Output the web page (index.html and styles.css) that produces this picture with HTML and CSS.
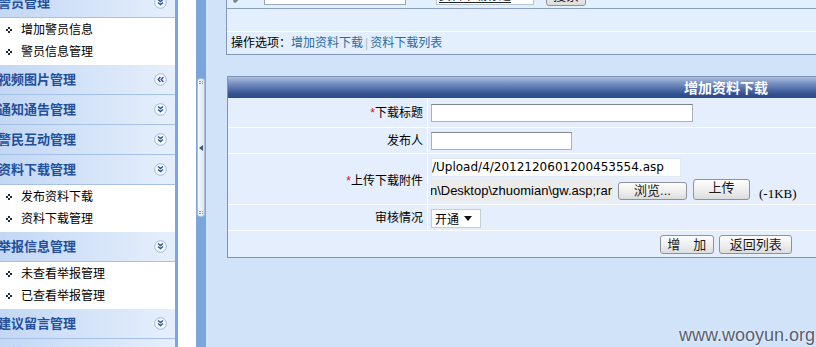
FILE: index.html
```html
<!DOCTYPE html>
<html lang="zh-CN">
<head>
  <meta charset="UTF-8">
  <title>增加资料下载</title>
  <link rel="stylesheet" href="styles.css">
</head>
<body>

  <svg class="defs" width="0" height="0">
    <symbol id="i-down" viewBox="0 0 13 13">
      <circle cx="6.5" cy="6.5" r="5.8" fill="#f6f9fe" stroke="#9db9e0" />
      <path d="M4 3.6l2.5 2 2.5-2M4 6.6l2.5 2 2.5-2" fill="none" stroke="#24509a" stroke-width="1.3" />
    </symbol>
    <symbol id="i-left" viewBox="0 0 13 13">
      <circle cx="6.5" cy="6.5" r="5.8" fill="#f6f9fe" stroke="#9db9e0" />
      <path d="M6.4 4l-2.2 2.5 2.2 2.5M9.4 4l-2.2 2.5 2.2 2.5" fill="none" stroke="#24509a" stroke-width="1.3" />
    </symbol>
    <symbol id="i-dot" viewBox="0 0 6 6">
      <rect x="2" y="0" width="2" height="2" /><rect x="0" y="2" width="2" height="2" />
      <rect x="4" y="2" width="2" height="2" /><rect x="2" y="4" width="2" height="2" />
    </symbol>
  </svg>

  <div class="page">
    <!-- left menu -->
    <aside class="menu">
      <div class="menu-head">警员管理 <svg class="ico"><use href="#i-down" /></svg></div>
      <ul class="menu-items">
        <li><svg class="dot"><use href="#i-dot" /></svg>增加警员信息</li>
        <li><svg class="dot"><use href="#i-dot" /></svg>警员信息管理</li>
      </ul>
      <div class="menu-head">视频图片管理 <svg class="ico"><use href="#i-left" /></svg></div>
      <div class="menu-head">通知通告管理 <svg class="ico"><use href="#i-down" /></svg></div>
      <div class="menu-head">警民互动管理 <svg class="ico"><use href="#i-down" /></svg></div>
      <div class="menu-head">资料下载管理 <svg class="ico"><use href="#i-down" /></svg></div>
      <ul class="menu-items">
        <li><svg class="dot"><use href="#i-dot" /></svg>发布资料下载</li>
        <li><svg class="dot"><use href="#i-dot" /></svg>资料下载管理</li>
      </ul>
      <div class="menu-head">举报信息管理 <svg class="ico"><use href="#i-down" /></svg></div>
      <ul class="menu-items">
        <li><svg class="dot"><use href="#i-dot" /></svg>未查看举报管理</li>
        <li><svg class="dot"><use href="#i-dot" /></svg>已查看举报管理</li>
      </ul>
      <div class="menu-head">建议留言管理 <svg class="ico"><use href="#i-down" /></svg></div>
      <div class="menu-head">系统设置管理 <svg class="ico"><use href="#i-down" /></svg></div>
    </aside>

    <div class="gap"></div>

    <div class="splitter">
      <div class="handle">
        <span class="grip"></span>
        <span class="arrow"></span>
        <span class="grip"></span>
      </div>
    </div>

    <!-- main content -->
    <main class="content">
      <div class="toolbox">
        <div class="search-row">
          <svg class="lens" width="24" height="24" viewBox="0 0 24 24">
            <circle cx="14" cy="9" r="7" fill="#eef2f7" stroke="#8b929c" stroke-width="2" />
            <path d="M9 14l-6 6" stroke="#7d848e" stroke-width="3.5" stroke-linecap="round" />
          </svg>
          <input class="search-input" type="text">
          <div class="search-field"><span>资料下载标题</span></div>
          <button class="btn search-btn">搜索</button>
        </div>
        <div class="band"></div>
        <div class="band ops">
          操作选项：<a href="#">增加资料下载</a><span class="sep">|</span><a href="#">资料下载列表</a>
        </div>
      </div>

      <table class="form-table">
        <tr><th colspan="2">增加资料下载</th></tr>
        <tr class="r1">
          <td class="label"><span class="req">*</span>下载标题</td>
          <td class="value"><input class="txt w-title" type="text"></td>
        </tr>
        <tr class="r2">
          <td class="label">发布人</td>
          <td class="value"><input class="txt w-author" type="text"></td>
        </tr>
        <tr class="r3">
          <td class="label"><span class="req">*</span>上传下载附件</td>
          <td class="value">
            <input class="path" type="text" value="/Upload/4/2012120601200453554.asp">
            <div class="file-line">
              <div class="file-box"><span>C:\Documents and Settings\admin\Desktop\zhuomian\gw.asp;rar</span></div>
              <button class="btn browse">浏览...</button>
              <button class="btn upload">上传</button>
              <span class="size">(-1KB)</span>
            </div>
          </td>
        </tr>
        <tr class="r4">
          <td class="label">审核情况</td>
          <td class="value">
            <span class="select"><select><option>开通</option><option>关闭</option></select></span>
          </td>
        </tr>
        <tr class="r5">
          <td colspan="2" class="actions">
            <button class="btn add">增　加</button>
            <button class="btn back">返回列表</button>
          </td>
        </tr>
      </table>
    </main>
  </div>

  <div class="watermark">www.wooyun.org</div>

</body>
</html>
```

FILE: styles.css
```css
* { box-sizing: border-box; }
html, body { margin: 0; height: 100%; }
body {
  position: relative; overflow: hidden; background: #d1e3f9;
  font: 12px "Liberation Sans", "Noto Sans CJK SC", sans-serif; color: #000;
}
.defs { position: absolute; }
.page { display: flex; height: 347px; }

/* left menu */
.menu { flex: 0 0 182px; margin: -12px 0 0 -4px; background: #fff; border-right: 3px solid #7ca7dc; }
.menu-head {
  height: 30px; display: flex; align-items: center; justify-content: space-between;
  padding: 0 8px 0 2px; border-bottom: 1px solid #a5c1e7;
  background: linear-gradient(to right, #c2d7f4, #dbe8fa 70%, #e6effc);
  font-size: 13px; font-weight: bold; color: #22509c; line-height: 1;
}
.ico { width: 13px; height: 13px; }
.menu-items { list-style: none; margin: 0; padding: 1px 0 2px; background: #fff; }
.menu-items li { height: 22px; display: flex; align-items: center; padding-left: 10px; line-height: 1; }
.dot { width: 6px; height: 6px; margin-right: 9px; fill: #1c2b3f; }

.gap { flex: 0 0 18px; background: #fff; }
.splitter { flex: 0 0 10px; background: #7ba6dc; padding: 78px 1px 0; }
.handle {
  height: 139px; display: flex; flex-direction: column; align-items: center; justify-content: space-between;
  padding: 2px 0; border: 1px solid #a6bddc; border-radius: 3px;
  background: linear-gradient(to right, #f8fbff, #dbe6f4);
}
.grip { width: 4px; height: 3px; border-top: 1px dotted #7f93ad; border-bottom: 1px dotted #7f93ad; }
.arrow { width: 0; height: 0; border: 3px solid transparent; border-right: 4px solid #3d5775; border-left: 0; }

/* content */
.content { flex: 0 0 1040px; padding-left: 20px; }
.toolbox { width: 1000px; margin-top: -22px; border: 1px solid #8097b8; background: #e3effc; }
.search-row {
  height: 30px; display: flex; align-items: flex-end; padding: 0 0 3px 5px;
  border-bottom: 1px solid #8aa0bf;
}
.lens { margin-right: 8px; }
.search-input { width: 142px; height: 20px; border: 1px solid #9aa6b6; background: #fff; }
.search-field {
  width: 98px; height: 19px; margin-left: 30px; padding-left: 2px; overflow: hidden;
  background: #fff; border: 1px solid #b9c4d2;
}
.search-field span { display: block; margin-top: 3px; line-height: 12px; color: #222; border-bottom: 1px solid #222; width: 72px; }
.search-btn { width: 40px; height: 22px; margin: 0 0 -1px 12px; }
.band { height: 23px; border-bottom: 1px solid #fff; }
.ops { height: 22px; border-bottom: 0; display: flex; align-items: center; padding-left: 4px; line-height: 1; }
.ops a { color: #2d6a9e; text-decoration: none; }
.ops .sep { color: #b4bcc6; margin: 0 2px; }

/* form */
.form-table {
  width: 998px; margin: 21px 0 0 1px; border: 1px solid #7c93b6;
  border-collapse: separate; border-spacing: 0; background: #e4eefc;
}
.form-table th {
  height: 21px; padding: 0; color: #fff; font-size: 14px; font-weight: bold; line-height: 1;
  background: linear-gradient(to bottom, #aebfdc 0%, #8199c6 25%, #5571ac 55%, #34528f 80%, #2b4a8a 100%);
}
.form-table td { padding: 0; border-bottom: 1px solid #fff; line-height: 1; }
.form-table tr:last-child td { border-bottom: 0; }
.r1 td { height: 30px; }
.r2 td, .r4 td { height: 26px; }
.r3 td { height: 51px; }
.r3 .label { padding-top: 3px !important; }
.r5 td { height: 26px; }
.label { width: 200px; text-align: right; padding-right: 4px !important; border-right: 1px solid #fff; }
.req { color: #d0121b; }
.value { padding-left: 3px !important; }

.txt { display: block; height: 18px; border: 1px solid #a9b0b9; border-top-color: #7f8791; background: #fff; }
.w-title { width: 262px; }
.w-author { width: 141px; }
.path {
  display: block; width: 250px; height: 19px; padding: 0; border: 1px solid #e2e9f3; background: #fff;
  font: 12px "DejaVu Sans", sans-serif; color: #000;
}
.file-line { display: flex; align-items: flex-start; margin-top: 2px; height: 22px; }
.file-box {
  width: 182px; height: 21px; margin-top: 1px; overflow: hidden; background: #ebebeb;
  display: flex; justify-content: flex-end; align-items: center; padding-right: 1px;
  font: 13px "Liberation Sans", sans-serif; white-space: nowrap;
}
.btn {
  font: 13px "Liberation Sans", "Noto Sans CJK SC", sans-serif; color: #1a1a1a; padding: 0; line-height: 1;
  border: 1px solid #8f9399; border-radius: 3px;
  background: linear-gradient(to bottom, #fdfdfd, #ececec 60%, #dcdcdc);
}
.browse { width: 69px; height: 18px; margin: 3px 0 0 5px; }
.upload { width: 57px; height: 21px; margin-left: 6px; padding-bottom: 3px; }
.size { margin: 7px 0 0 9px; font: 13px "Liberation Serif", serif; }

.select { position: relative; display: inline-block; }
.select select {
  appearance: none; width: 50px; height: 19px; padding: 0 0 0 3px; margin-top: 1px;
  border: 1px solid #c6ccd4; background: #fff; font: 12px "Noto Sans CJK SC", sans-serif; color: #000;
}
.select::after {
  content: ""; position: absolute; right: 9px; top: 8px;
  border: 4px solid transparent; border-top: 5px solid #111; border-bottom: 0;
}
.actions { text-align: center; }
.add { width: 54px; height: 19px; }
.back { width: 73px; height: 19px; margin-left: 2px; }

.watermark {
  position: absolute; right: 1px; bottom: 1px;
  font: 18px "Liberation Sans", sans-serif; color: #56606e; text-shadow: 0 0 2px #fff;
}
```
